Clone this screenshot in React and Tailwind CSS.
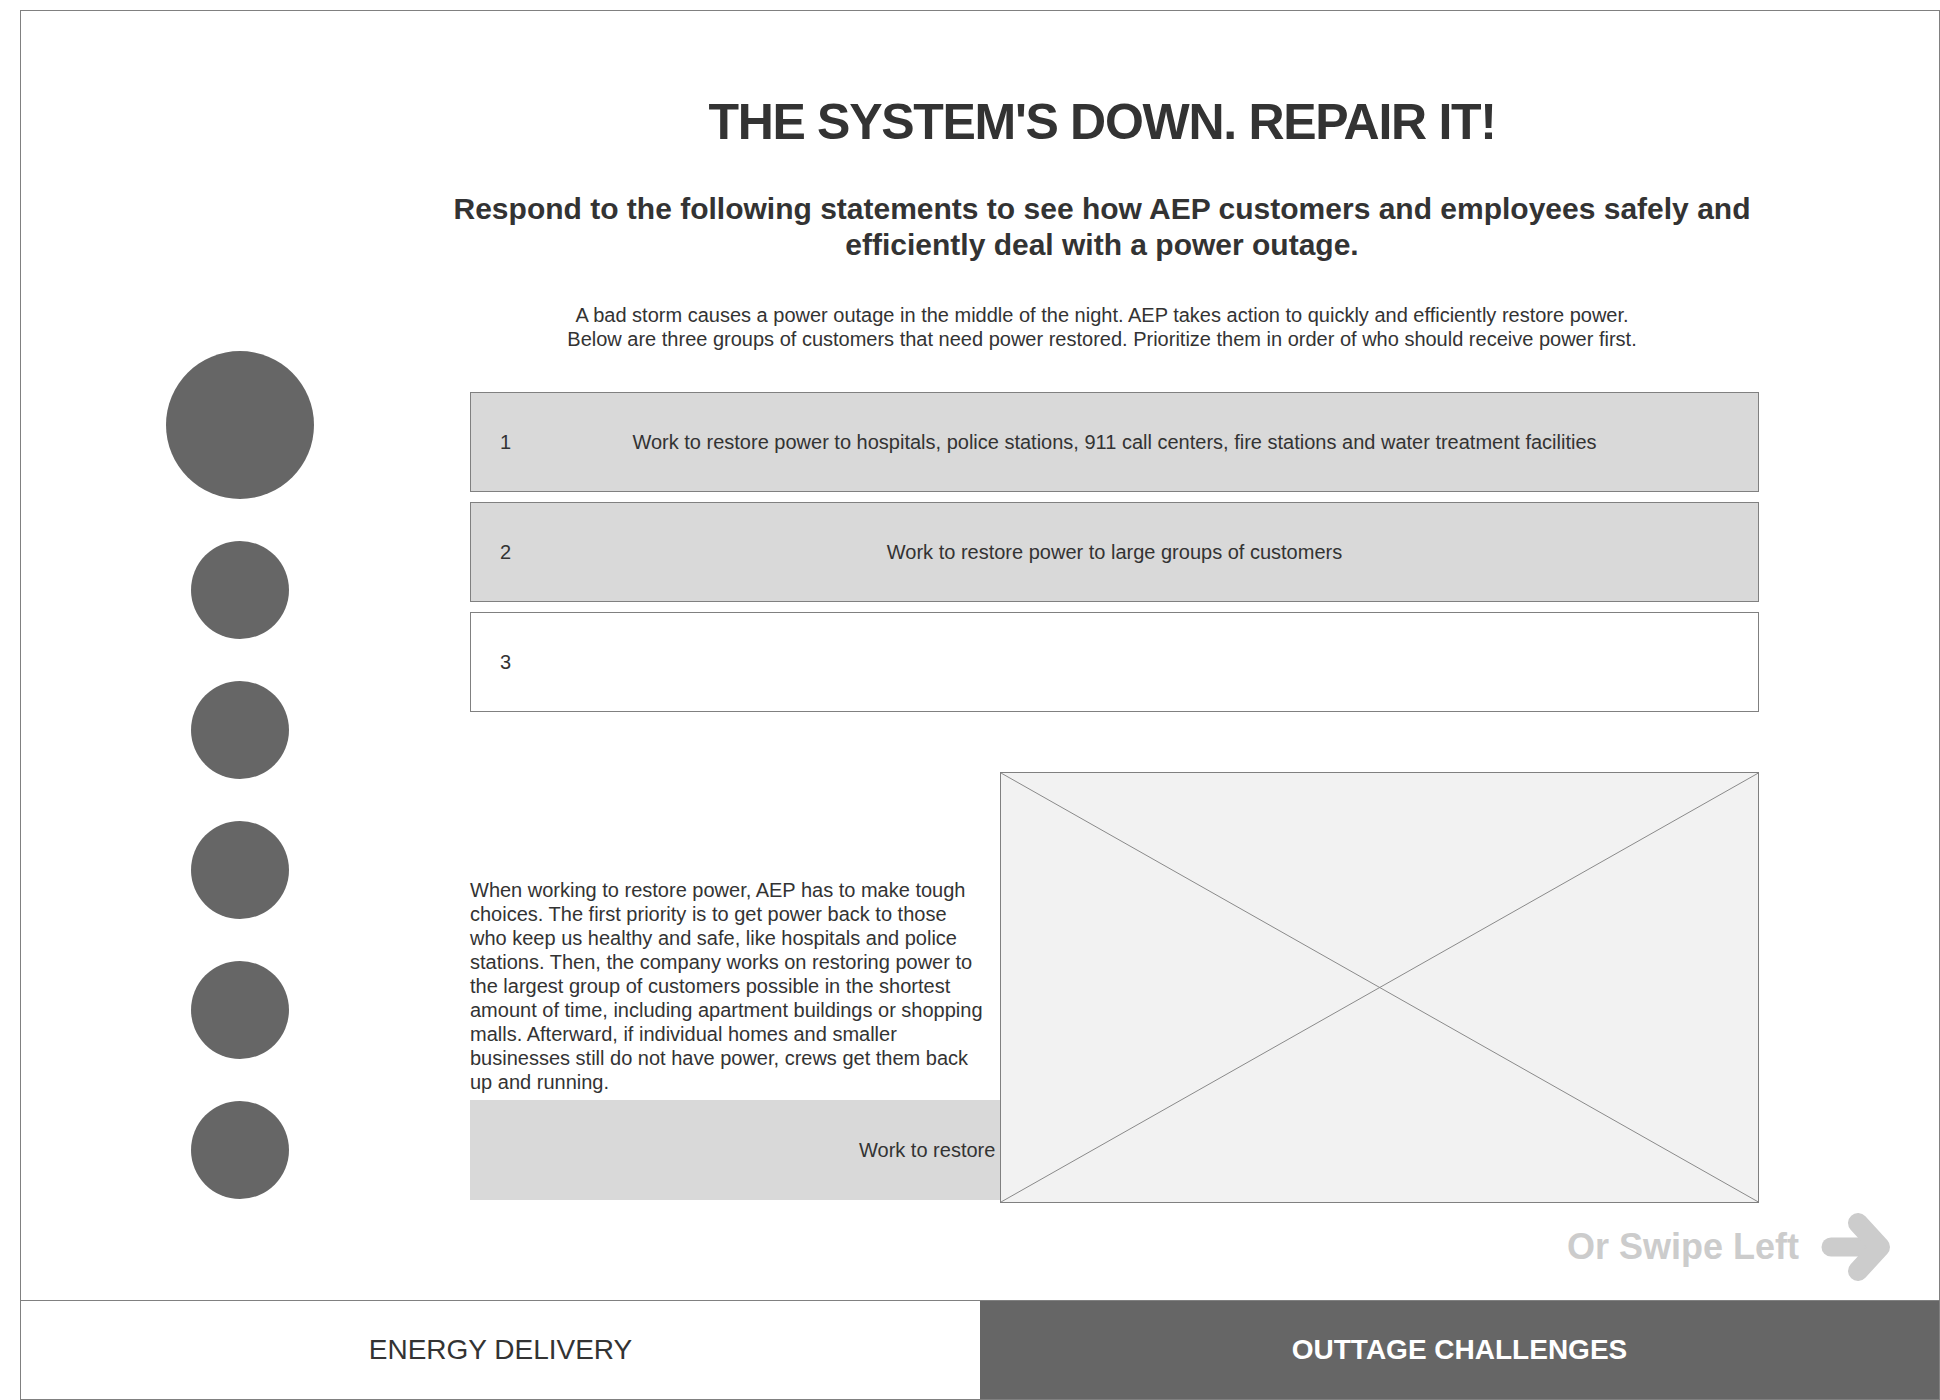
import React from "react";

const rows = [
  { n: "1", text: "Work to restore power to hospitals, police stations, 911 call centers, fire stations and water treatment facilities", filled: true },
  { n: "2", text: "Work to restore power to large groups of customers", filled: true },
  { n: "3", text: "", filled: false },
];

function SwipeArrow() {
  return (
    <svg width="70" height="70" viewBox="0 0 70 70" fill="none">
      <line x1="10" y1="35" x2="58" y2="35" stroke="#cccccc" strokeWidth="19" strokeLinecap="round" />
      <polyline points="37,11 59,35 37,59" stroke="#cccccc" strokeWidth="20" strokeLinecap="round" strokeLinejoin="round" />
    </svg>
  );
}

export default function App() {
  return (
    <div className="bg-white w-[1940px] h-[1400px] pt-[10px] pl-[20px] text-[#333333]" style={{ fontFamily: '"Liberation Sans", Arial, Helvetica, sans-serif' }}>
      <div className="w-[1920px] h-[1390px] border border-[#808080] flex flex-col">
        <main className="flex-1 flex flex-col">
          <div className="flex">
            <div className="w-[438px] flex flex-col items-center pt-[340px] gap-[42px]">
              <div className="w-[148px] h-[148px] rounded-full bg-[#666666]" />
              {[0, 1, 2, 3, 4].map((i) => (
                <div key={i} className="w-[98px] h-[98px] rounded-full bg-[#666666]" />
              ))}
            </div>
            <div className="pl-[11px] w-[1300px] pt-[82px] flex flex-col">
              <div className="w-[1289px] pr-[25px]">
                <div className="flex flex-col items-center">
                  <h1 className="text-[50px] leading-[58px] font-bold tracking-[-1.3px] whitespace-nowrap">THE SYSTEM'S DOWN. REPAIR IT!</h1>
                  <div className="mt-[40px] flex flex-col items-center text-[30px] leading-[36px] font-bold">
                    <span className="whitespace-nowrap">Respond to the following statements to see how AEP customers and employees safely and</span>
                    <span className="whitespace-nowrap">efficiently deal with a power outage.</span>
                  </div>
                  <div className="mt-[40px] flex flex-col items-center text-[20px] leading-[24px]">
                    <span className="whitespace-nowrap">A bad storm causes a power outage in the middle of the night. AEP takes action to quickly and efficiently restore power.</span>
                    <span className="whitespace-nowrap">Below are three groups of customers that need power restored. Prioritize them in order of who should receive power first.</span>
                  </div>
                </div>
              </div>
              <div className="mt-[41px] w-[1289px] flex flex-col gap-[10px]">
                {rows.map((r) => (
                  <div
                    key={r.n}
                    className={`h-[100px] border border-[#808080] grid grid-cols-[100px_1fr_100px] items-center text-[20px] ${r.filled ? "bg-[#d9d9d9]" : "bg-white"}`}
                  >
                    <span className="pl-[29px]">{r.n}</span>
                    <span className="text-center whitespace-nowrap">{r.text}</span>
                    <span />
                  </div>
                ))}
              </div>
              <div className="mt-[60px] w-[1289px] flex items-end">
                <div className="w-[530px] flex flex-col mb-[3px]">
                  <p className="w-[516px] text-[20px] leading-[24px] mb-[6px]">
                    When working to restore power, AEP has to make tough choices. The first priority is to get power back to those who keep us healthy and safe, like hospitals and police stations. Then, the company works on restoring power to the largest group of customers possible in the shortest amount of time, including apartment buildings or shopping malls. Afterward, if individual homes and smaller businesses still do not have power, crews get them back up and running.
                  </p>
                  <div className="h-[100px] bg-[#d9d9d9] overflow-hidden flex items-center">
                    <span className="pl-[389px] whitespace-nowrap text-[20px]">Work to restore</span>
                  </div>
                </div>
                <div className="w-[760px] h-[431px] border border-[#808080] bg-[#f2f2f2]">
                  <svg className="w-full h-full block" viewBox="0 0 100 100" preserveAspectRatio="none">
                    <line x1="0" y1="0" x2="100" y2="100" stroke="#8a8a8a" strokeWidth="1" vectorEffect="non-scaling-stroke" />
                    <line x1="100" y1="0" x2="0" y2="100" stroke="#8a8a8a" strokeWidth="1" vectorEffect="non-scaling-stroke" />
                  </svg>
                </div>
              </div>
            </div>
          </div>
          <div className="mt-[9px] h-[70px] flex items-center justify-end pr-[48px] gap-[22px]">
            <span className="text-[36px] font-bold text-[#cccccc] leading-none">Or Swipe Left</span>
            <SwipeArrow />
          </div>
        </main>
        <footer className="h-[99px] border-t border-[#808080] grid grid-cols-2">
          <div className="flex items-center justify-center text-[28px] text-[#333333]">ENERGY DELIVERY</div>
          <div className="flex items-center justify-center bg-[#666666] text-[28px] font-bold text-white">OUTTAGE CHALLENGES</div>
        </footer>
      </div>
    </div>
  );
}
